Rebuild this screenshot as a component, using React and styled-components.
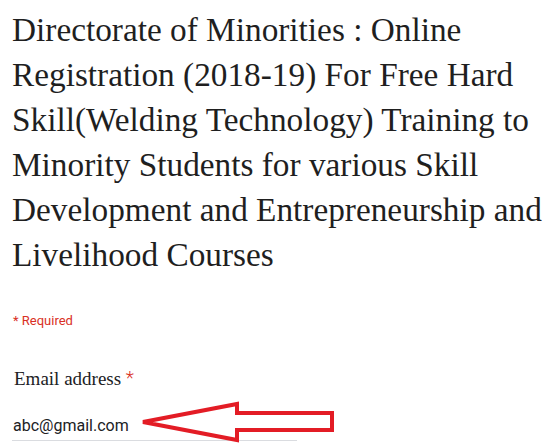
import React from 'react';
import styled, { createGlobalStyle } from 'styled-components';

const titleLines = [
    'Directorate of Minorities : Online',
    'Registration (2018-19) For Free Hard',
    'Skill(Welding Technology) Training to',
    'Minority Students for various Skill',
    'Development and Entrepreneurship and',
    'Livelihood Courses'
];

//The red annotation arrow pointing at the filled email field
const PointerArrow = () => (
    <ArrowSvg width="205" height="45" viewBox="0 0 205 45">
        <polygon
            points="8,24 102,6 102,15 197,15 197,32 102,32 102,42"
            fill="none"
            stroke="#e31c25"
            strokeWidth="4"
            strokeLinejoin="miter"
        />
    </ArrowSvg>
);

const App = () => {
    return (
        <Page>
            <GlobalStyle />
            <Title>
                {titleLines.map((line) => <TitleLine key={line}>{line}</TitleLine>)}
            </Title>
            <RequiredNote>* Required</RequiredNote>
            <FieldLabel>Email address <Star>*</Star></FieldLabel>
            <Field>
                <FieldValue>abc@gmail.com</FieldValue>
                <PointerArrow />
            </Field>
        </Page>
    );
}

const GlobalStyle = createGlobalStyle`
    html, body {
        margin: 0;
        padding: 0;
        background: #fff;
    }
`;

const Page = styled.div`
    width: 551px;
    height: 443px;
    box-sizing: border-box;
    padding: 7px 0 0 12px;
    overflow: hidden;
`;

const Title = styled.h1`
    margin: 0;
    font-family: 'Liberation Serif', 'Times New Roman', serif;
    font-weight: 400;
    font-size: 33.3px;
    line-height: 45px;
    color: #1f1f1f;
`;

const TitleLine = styled.span`
    display: block;
    white-space: nowrap;
`;

const RequiredNote = styled.div`
    margin-top: 35px;
    font-family: Roboto, Arial, sans-serif;
    font-size: 13px;
    line-height: 17px;
    color: #d93025;
    padding-left: 1px;
`;

const FieldLabel = styled.div`
    margin-top: 37px;
    font-family: 'Liberation Serif', 'Times New Roman', serif;
    font-size: 19px;
    line-height: 24px;
    color: #202124;
    padding-left: 2px;
`;

const Star = styled.span`
    color: #d93025;
    font-family: Roboto, Arial, sans-serif;
    font-weight: 300;
    vertical-align: 1px;
`;

const Field = styled.div`
    position: relative;
    margin-top: 23px;
    width: 284px;
    padding: 0 0 2px 1px;
    border-bottom: 1px solid #dadce0;
`;

const FieldValue = styled.div`
    font-family: Roboto, Arial, sans-serif;
    font-size: 16px;
    line-height: 24px;
    color: #202124;
`;

const ArrowSvg = styled.svg`
    position: absolute;
    left: 123px;
    top: -16px;
    overflow: visible;
`;

export default App;
